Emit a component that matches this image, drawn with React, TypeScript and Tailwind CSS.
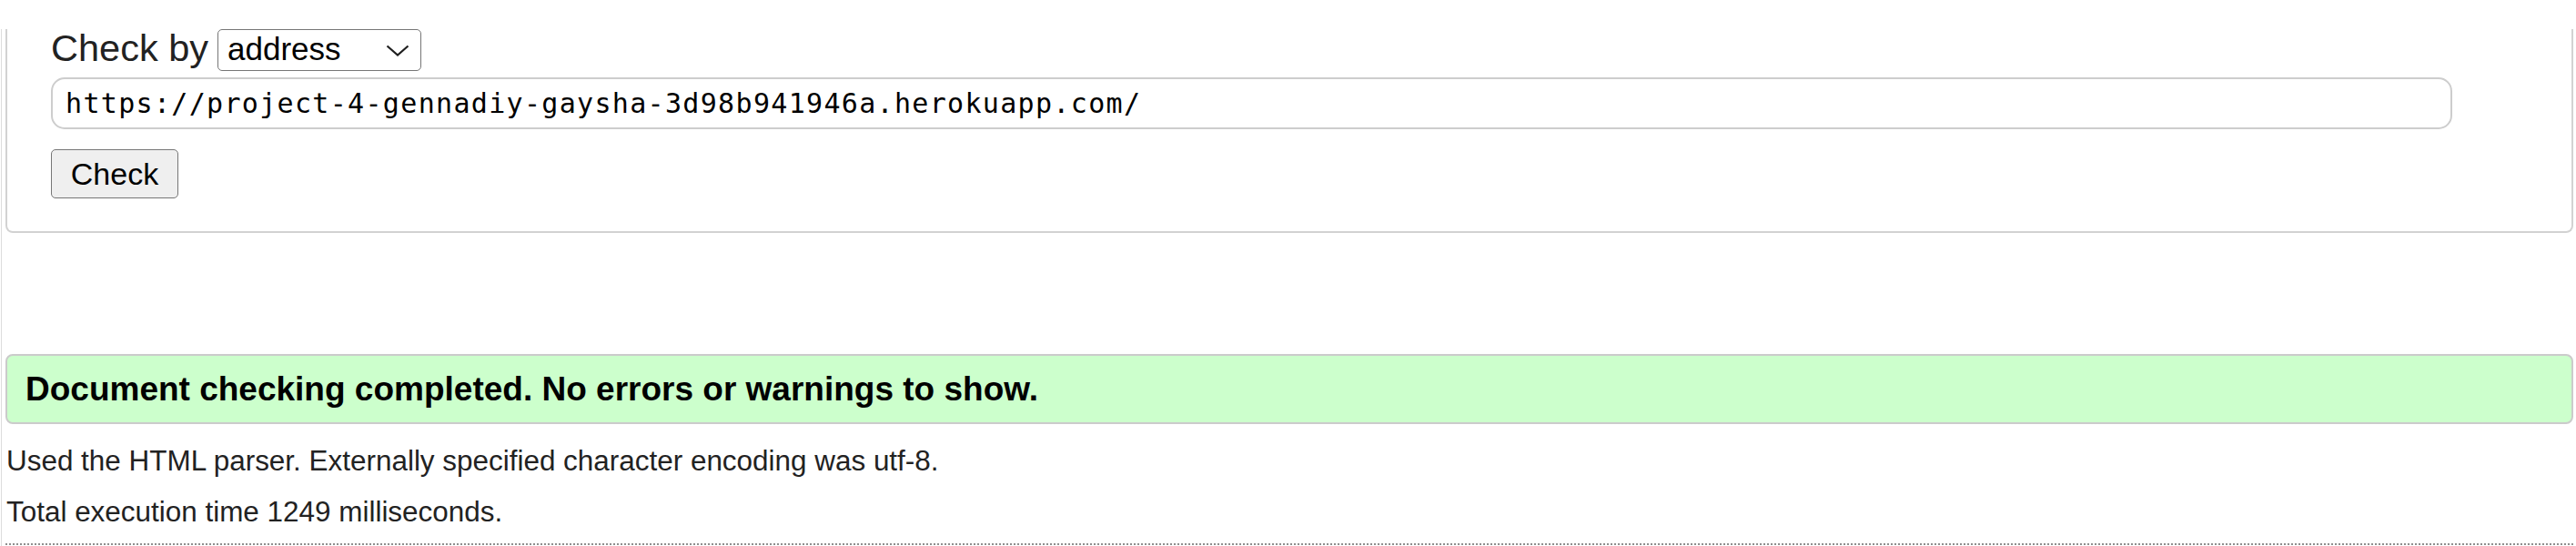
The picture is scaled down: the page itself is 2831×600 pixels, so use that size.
import React from "react";

// Validator result page: "check by" form on top, result summary below.

const sans = "font-['Liberation_Sans',Arial,sans-serif]";

function Chevron() {
  return (
    <svg
      aria-hidden
      width="26"
      height="13"
      viewBox="0 0 26 13"
      className="pointer-events-none absolute left-[185px] top-[17px]"
    >
      <polyline points="1.5,1.5 13,11.5 24.5,1.5" fill="none" stroke="#1f1f1f" strokeWidth="2.2" />
    </svg>
  );
}

function CheckForm() {
  return (
    <div className="ml-[4px] mr-[3px] rounded-b-[8px] border-2 border-t-0 border-[#d2d2d2] pb-[36px] pl-[48px]">
      {/* Check by + select */}
      <div className="mt-[32px] flex items-start gap-[10px]">
        <span className={`${sans} text-[41.5px] leading-[42px] text-[#222]`}>Check by</span>
        <div className="relative">
          <select
            defaultValue="address"
            className={`${sans} h-[46px] w-[224px] appearance-none rounded-[5px] border-[1.5px] border-[#767676] bg-white py-0 pb-[3px] pl-[10px] text-[35px] leading-[40px] text-black`}
          >
            <option value="address">address</option>
            <option value="upload">file upload</option>
            <option value="input">text input</option>
          </select>
          <Chevron />
        </div>
      </div>

      {/* Address field */}
      <div className="mr-[131px] mt-[7px] flex h-[57px] items-center rounded-[15px] border-2 border-[#cdcdcd] pl-[14px]">
        <span className="font-['DejaVu_Sans_Mono',monospace] text-[30px] tracking-[1.32px] text-black">
          https://project-4-gennadiy-gaysha-3d98b941946a.herokuapp.com/
        </span>
      </div>

      <button
        type="button"
        className={`${sans} mt-[22px] h-[54px] w-[140px] rounded-[5px] border-[1.5px] border-[#767676] bg-[#efefef] text-[34px] text-black`}
      >
        Check
      </button>
    </div>
  );
}

function Results() {
  return (
    <div className={sans}>
      <div className="ml-[4px] mr-[3px] mt-[133px] flex h-[77px] items-center rounded-[8px] border-2 border-[#cbcbcb] bg-[#ccffcc] pl-[20px]">
        <h2 className="text-[37px] font-bold text-black">
          Document checking completed. No errors or warnings to show.
        </h2>
      </div>
      <div className="ml-[5px] mt-[13px] text-[31.45px] leading-[56px] text-[#222]">
        <p>Used the HTML parser. Externally specified character encoding was utf-8.</p>
        <p>Total execution time 1249 milliseconds.</p>
      </div>
      <hr className="ml-[4px] mr-[3px] mt-[6px] border-0 border-t-2 border-dotted border-[#8f8f8f]" />
    </div>
  );
}

export default function App() {
  return (
    <div className="h-[600px] overflow-hidden bg-white">
      <div className="ml-px h-[600px] border-l border-[#dcdcdc]">
        <CheckForm />
        <Results />
      </div>
    </div>
  );
}
